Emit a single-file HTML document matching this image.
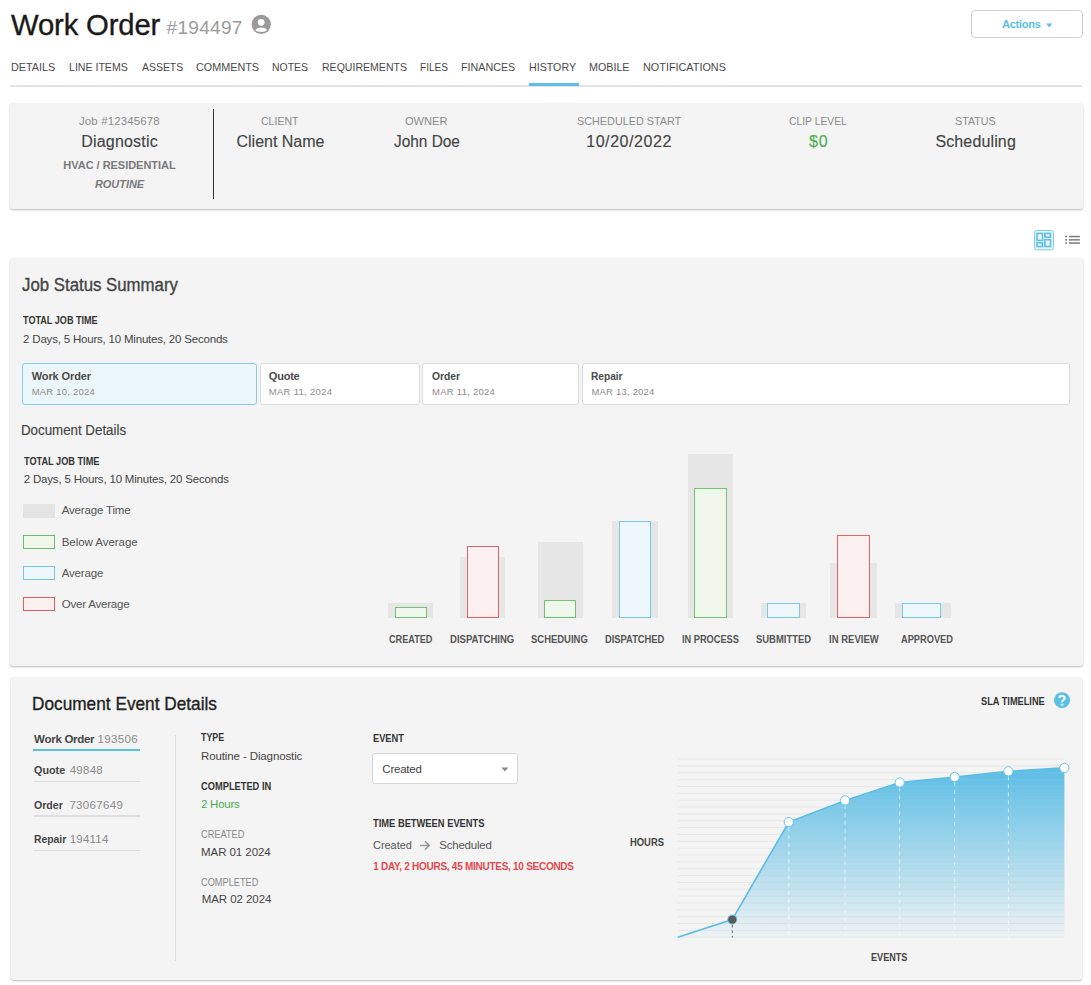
<!DOCTYPE html>
<html><head><meta charset="utf-8"><title>Work Order</title>
<style>
html,body{margin:0;padding:0;background:#fff;}
body{width:1091px;height:985px;position:relative;overflow:hidden;font-family:"Liberation Sans",sans-serif;}
.b{position:absolute;}
.t{position:absolute;white-space:nowrap;}
</style></head><body>
<div class="b" style="left:971px;top:10px;width:112px;height:28px;border:1px solid #d2d2d2;border-radius:4px;box-sizing:border-box;background:#fff"></div>
<svg class="b" style="left:1046px;top:22.5px" width="7" height="5"><path d="M0.3 0.4 L6.2 0.4 L3.25 4.6 Z" fill="#5bc0e6"/></svg>
<svg class="b" style="left:250px;top:13px" width="23" height="23" viewBox="0 0 23 23"><circle cx="11.25" cy="11.35" r="9.6" fill="#9a9a9a"/><circle cx="11.2" cy="9.35" r="3.4" fill="#fff"/><path d="M5.4 17.0 C7.2 13.7 15.3 13.7 17.1 17.0 C15.3 19.6 7.2 19.6 5.4 17.0Z" fill="#fff"/></svg>
<div class="b" style="left:10px;top:85px;width:1072px;height:2px;background:#e3e3e3"></div>
<div class="b" style="left:528.5px;top:83px;width:50.5px;height:3px;background:#5bc0e6"></div>
<div class="b" style="left:10px;top:102.5px;width:1072.5px;height:106.3px;background:#f4f4f4;border-radius:3px;box-shadow:0 1px 2px rgba(0,0,0,.28)"></div>
<div class="b" style="left:213px;top:108.7px;width:1px;height:90.7px;background:#333"></div>
<svg class="b" style="left:1033px;top:229px" width="22" height="22" viewBox="0 0 22 22">
<rect x="1.5" y="1.5" width="19" height="19.3" rx="2" fill="#eaf5fa" stroke="#7fcdec" stroke-width="1"/>
<rect x="4" y="4.4" width="5.5" height="7" fill="#eef7fb" stroke="#5bc0e6" stroke-width="1.6"/>
<rect x="11.9" y="4.4" width="5.6" height="3.7" fill="#eef7fb" stroke="#5bc0e6" stroke-width="1.6"/>
<rect x="4" y="13.8" width="5.5" height="3.7" fill="#eef7fb" stroke="#5bc0e6" stroke-width="1.6"/>
<rect x="11.9" y="10.7" width="5.6" height="6.8" fill="#eef7fb" stroke="#5bc0e6" stroke-width="1.6"/>
</svg>
<svg class="b" style="left:1064px;top:234px" width="17" height="12" viewBox="0 0 17 12">
<g fill="#7a7a7a"><rect x="1.2" y="1.8" width="1.8" height="1.5"/><rect x="1.2" y="5.1" width="1.8" height="1.5"/><rect x="1.2" y="8.3" width="1.8" height="1.5"/>
<rect x="4.9" y="1.8" width="11" height="1.5"/><rect x="4.9" y="5.1" width="11" height="1.5"/><rect x="4.9" y="8.3" width="11" height="1.5"/></g></svg>
<div class="b" style="left:9.5px;top:257.5px;width:1073px;height:408.5px;background:#f4f4f4;border-radius:3px;box-shadow:0 1px 2px rgba(0,0,0,.28)"></div>
<div class="b" style="left:22px;top:363.2px;width:235px;height:41.5px;background:#ebf6fb;border:1px solid #86cdea;border-radius:3px;box-sizing:border-box"></div>
<div class="b" style="left:259.5px;top:363.2px;width:160.5px;height:41.5px;background:#fff;border:1px solid #dcdcdc;border-radius:3px;box-sizing:border-box"></div>
<div class="b" style="left:422.3px;top:363.2px;width:157.0px;height:41.5px;background:#fff;border:1px solid #dcdcdc;border-radius:3px;box-sizing:border-box"></div>
<div class="b" style="left:581.7px;top:363.2px;width:487.9px;height:41.5px;background:#fff;border:1px solid #dcdcdc;border-radius:3px;box-sizing:border-box"></div>
<div class="b" style="left:22.9px;top:504px;width:32px;height:13.7px;background:#e4e4e4"></div>
<div class="b" style="left:22.9px;top:535px;width:32px;height:13.7px;background:#eff8ea;border:1px solid #66c06a;box-sizing:border-box"></div>
<div class="b" style="left:22.9px;top:566.1px;width:32px;height:13.7px;background:#edf7fc;border:1px solid #72c7ea;box-sizing:border-box"></div>
<div class="b" style="left:22.9px;top:597.2px;width:32px;height:13.7px;background:#fcefef;border:1px solid #e05e5e;box-sizing:border-box"></div>
<div class="b" style="left:388.1px;top:602.7px;width:44.8px;height:14.9px;background:#e6e6e6"></div>
<div class="b" style="left:394.8px;top:607px;width:32.1px;height:10.6px;background:#eff8ea;border:1px solid #72c375;box-sizing:border-box"></div>
<div class="b" style="left:459.8px;top:556.5px;width:44.8px;height:61.1px;background:#e6e6e6"></div>
<div class="b" style="left:466.8px;top:545.9px;width:31.8px;height:71.7px;background:#fcefef;border:1px solid #e26464;box-sizing:border-box"></div>
<div class="b" style="left:537.9px;top:542.2px;width:44.7px;height:75.4px;background:#e6e6e6"></div>
<div class="b" style="left:543.9px;top:599.7px;width:31.8px;height:17.9px;background:#eff8ea;border:1px solid #72c375;box-sizing:border-box"></div>
<div class="b" style="left:612px;top:521px;width:46px;height:96.6px;background:#e6e6e6"></div>
<div class="b" style="left:618.6px;top:521px;width:32.1px;height:96.6px;background:#edf7fc;border:1px solid #78c9ea;box-sizing:border-box"></div>
<div class="b" style="left:687.5px;top:454.2px;width:45.1px;height:163.4px;background:#e6e6e6"></div>
<div class="b" style="left:694.2px;top:488.4px;width:32.4px;height:129.2px;background:#eff8ea;border:1px solid #72c375;box-sizing:border-box"></div>
<div class="b" style="left:760.7px;top:602.7px;width:45.4px;height:14.9px;background:#e6e6e6"></div>
<div class="b" style="left:767.4px;top:603.3px;width:32.6px;height:14.3px;background:#edf7fc;border:1px solid #78c9ea;box-sizing:border-box"></div>
<div class="b" style="left:830.3px;top:562.5px;width:46.6px;height:55.1px;background:#e6e6e6"></div>
<div class="b" style="left:837.3px;top:535.3px;width:32.3px;height:82.3px;background:#fcefef;border:1px solid #e26464;box-sizing:border-box"></div>
<div class="b" style="left:895.3px;top:602.7px;width:56.0px;height:14.9px;background:#e6e6e6"></div>
<div class="b" style="left:902.3px;top:603.3px;width:39.0px;height:14.3px;background:#edf7fc;border:1px solid #78c9ea;box-sizing:border-box"></div>
<div class="b" style="left:10.8px;top:677px;width:1071.7px;height:303px;background:#f4f4f4;border-radius:3px;box-shadow:0 1px 2px rgba(0,0,0,.28)"></div>
<div class="b" style="left:33.1px;top:749.2px;width:107.3px;height:2px;background:#5bc0e6"></div>
<div class="b" style="left:33.8px;top:780.7px;width:106px;height:1.5px;background:#dedede"></div>
<div class="b" style="left:33.8px;top:815.4px;width:106px;height:1.5px;background:#dedede"></div>
<div class="b" style="left:33.8px;top:849.6px;width:106px;height:1.5px;background:#dedede"></div>
<div class="b" style="left:175px;top:735px;width:1px;height:225.5px;background:#dcdcdc"></div>
<div class="b" style="left:372.3px;top:752.6px;width:145.5px;height:31.8px;background:#fff;border:1px solid #d6d6d6;border-radius:3px;box-sizing:border-box"></div>
<svg class="b" style="left:501px;top:766.5px" width="8" height="5"><path d="M0.4 0.6 L7.4 0.6 L3.9 4.4Z" fill="#8a8a8a"/></svg>
<svg class="b" style="left:419px;top:839.5px" width="12" height="11" viewBox="0 0 12 11"><path d="M1 5.5 H10 M6 1.4 L10.2 5.5 L6 9.6" fill="none" stroke="#9a9a9a" stroke-width="1.6"/></svg>
<svg class="b" style="left:1052px;top:690px" width="20" height="20" viewBox="0 0 20 20"><circle cx="10.05" cy="10.15" r="8" fill="#5bc0e6"/>
<path d="M7.4 8.1 C7.4 4.9 12.6 4.9 12.6 8 C12.6 9.9 10.1 10 10.1 12.2" fill="none" stroke="#fff" stroke-width="2.1"/><circle cx="10.1" cy="14.6" r="1.2" fill="#fff"/></svg>
<svg class="b" style="left:660px;top:740px" width="420" height="210" viewBox="0 0 420 210">
<defs><linearGradient id="ag" x1="0" y1="27" x2="0" y2="197" gradientUnits="userSpaceOnUse"><stop offset="0" stop-color="#5bbde5" stop-opacity="1"/><stop offset="1" stop-color="#5bbde5" stop-opacity="0.04"/></linearGradient></defs>
<g stroke="#e7e7e7" stroke-width="1"><line x1="17.7" x2="404.4" y1="19.10" y2="19.10"/><line x1="17.7" x2="404.4" y1="25.95" y2="25.95"/><line x1="17.7" x2="404.4" y1="32.80" y2="32.80"/><line x1="17.7" x2="404.4" y1="39.65" y2="39.65"/><line x1="17.7" x2="404.4" y1="46.50" y2="46.50"/><line x1="17.7" x2="404.4" y1="53.35" y2="53.35"/><line x1="17.7" x2="404.4" y1="60.20" y2="60.20"/><line x1="17.7" x2="404.4" y1="67.05" y2="67.05"/><line x1="17.7" x2="404.4" y1="73.90" y2="73.90"/><line x1="17.7" x2="404.4" y1="80.75" y2="80.75"/><line x1="17.7" x2="404.4" y1="87.60" y2="87.60"/><line x1="17.7" x2="404.4" y1="94.45" y2="94.45"/><line x1="17.7" x2="404.4" y1="101.30" y2="101.30"/><line x1="17.7" x2="404.4" y1="108.15" y2="108.15"/><line x1="17.7" x2="404.4" y1="115.00" y2="115.00"/><line x1="17.7" x2="404.4" y1="121.85" y2="121.85"/><line x1="17.7" x2="404.4" y1="128.70" y2="128.70"/><line x1="17.7" x2="404.4" y1="135.55" y2="135.55"/><line x1="17.7" x2="404.4" y1="142.40" y2="142.40"/><line x1="17.7" x2="404.4" y1="149.25" y2="149.25"/><line x1="17.7" x2="404.4" y1="156.10" y2="156.10"/><line x1="17.7" x2="404.4" y1="162.95" y2="162.95"/><line x1="17.7" x2="404.4" y1="169.80" y2="169.80"/><line x1="17.7" x2="404.4" y1="176.65" y2="176.65"/><line x1="17.7" x2="404.4" y1="183.50" y2="183.50"/><line x1="17.7" x2="404.4" y1="190.35" y2="190.35"/><line x1="17.7" x2="404.4" y1="197.20" y2="197.20"/></g>
<polygon points="17.7,197.2 72.3,179.6 128.8,82.1 185.1,60.4 239.7,42.5 294.7,37.0 348.4,31.3 404.4,27.9 404.4,197.5 17.7,197.5" fill="url(#ag)"/>
<g stroke="#ffffff" stroke-opacity="0.08" stroke-width="1"><line x1="17.7" x2="404.4" y1="19.10" y2="19.10"/><line x1="17.7" x2="404.4" y1="25.95" y2="25.95"/><line x1="17.7" x2="404.4" y1="32.80" y2="32.80"/><line x1="17.7" x2="404.4" y1="39.65" y2="39.65"/><line x1="17.7" x2="404.4" y1="46.50" y2="46.50"/><line x1="17.7" x2="404.4" y1="53.35" y2="53.35"/><line x1="17.7" x2="404.4" y1="60.20" y2="60.20"/><line x1="17.7" x2="404.4" y1="67.05" y2="67.05"/><line x1="17.7" x2="404.4" y1="73.90" y2="73.90"/><line x1="17.7" x2="404.4" y1="80.75" y2="80.75"/><line x1="17.7" x2="404.4" y1="87.60" y2="87.60"/><line x1="17.7" x2="404.4" y1="94.45" y2="94.45"/><line x1="17.7" x2="404.4" y1="101.30" y2="101.30"/><line x1="17.7" x2="404.4" y1="108.15" y2="108.15"/><line x1="17.7" x2="404.4" y1="115.00" y2="115.00"/><line x1="17.7" x2="404.4" y1="121.85" y2="121.85"/><line x1="17.7" x2="404.4" y1="128.70" y2="128.70"/><line x1="17.7" x2="404.4" y1="135.55" y2="135.55"/><line x1="17.7" x2="404.4" y1="142.40" y2="142.40"/><line x1="17.7" x2="404.4" y1="149.25" y2="149.25"/><line x1="17.7" x2="404.4" y1="156.10" y2="156.10"/><line x1="17.7" x2="404.4" y1="162.95" y2="162.95"/><line x1="17.7" x2="404.4" y1="169.80" y2="169.80"/><line x1="17.7" x2="404.4" y1="176.65" y2="176.65"/><line x1="17.7" x2="404.4" y1="183.50" y2="183.50"/><line x1="17.7" x2="404.4" y1="190.35" y2="190.35"/><line x1="17.7" x2="404.4" y1="197.20" y2="197.20"/></g>
<g stroke="#fff" stroke-width="1" stroke-dasharray="4 4" opacity="0.6"><line x1="128.8" x2="128.8" y1="87.1" y2="197.5"/><line x1="185.1" x2="185.1" y1="65.4" y2="197.5"/><line x1="239.7" x2="239.7" y1="47.5" y2="197.5"/><line x1="294.7" x2="294.7" y1="42.0" y2="197.5"/><line x1="348.4" x2="348.4" y1="36.3" y2="197.5"/></g>
<line x1="72.29999999999995" x2="72.29999999999995" y1="185" y2="197.5" stroke="#666" stroke-width="1" stroke-dasharray="2.5 3"/>
<polyline points="17.7,197.2 72.3,179.6 128.8,82.1 185.1,60.4 239.7,42.5 294.7,37.0 348.4,31.3 404.4,27.9" fill="none" stroke="#5bbde5" stroke-width="1.6"/>
<g fill="#fff" stroke="#6cc6ea" stroke-width="1"><circle cx="128.8" cy="82.1" r="4.6"/><circle cx="185.1" cy="60.4" r="4.6"/><circle cx="239.7" cy="42.5" r="4.6"/><circle cx="294.7" cy="37.0" r="4.6"/><circle cx="348.4" cy="31.3" r="4.6"/><circle cx="404.4" cy="27.9" r="4.6"/></g>
<circle cx="72.29999999999995" cy="179.60000000000002" r="4.6" fill="#5a5a5a" stroke="#7ccbea" stroke-width="1"/>
</svg>
<div class="t" style="left:11.00px;top:5.70px;font-size:29.28px;line-height:37px;color:#1a1a1a;-webkit-text-stroke:0.35px #1a1a1a;letter-spacing:-0.160px">Work Order</div>
<div class="t" style="left:166.50px;top:15.70px;font-size:18.99px;line-height:24px;color:#9b9b9b;letter-spacing:0.317px">#194497</div>
<div class="t" style="left:1002.00px;top:16.80px;font-size:11.00px;line-height:14px;color:#5bc0e6;font-weight:700;letter-spacing:-0.253px">Actions</div>
<div class="t" style="left:11.00px;top:60.10px;font-size:11.50px;line-height:14px;color:#4a4a4a;transform:scaleX(0.9366);transform-origin:0 0">DETAILS</div>
<div class="t" style="left:68.70px;top:60.10px;font-size:11.50px;line-height:14px;color:#4a4a4a;transform:scaleX(0.9201);transform-origin:0 0">LINE ITEMS</div>
<div class="t" style="left:141.50px;top:60.10px;font-size:11.50px;line-height:14px;color:#4a4a4a;transform:scaleX(0.9080);transform-origin:0 0">ASSETS</div>
<div class="t" style="left:195.60px;top:60.10px;font-size:11.50px;line-height:14px;color:#4a4a4a;transform:scaleX(0.9405);transform-origin:0 0">COMMENTS</div>
<div class="t" style="left:271.70px;top:60.10px;font-size:11.50px;line-height:14px;color:#4a4a4a;transform:scaleX(0.9062);transform-origin:0 0">NOTES</div>
<div class="t" style="left:321.60px;top:60.10px;font-size:11.50px;line-height:14px;color:#4a4a4a;transform:scaleX(0.9174);transform-origin:0 0">REQUIREMENTS</div>
<div class="t" style="left:419.70px;top:60.10px;font-size:11.50px;line-height:14px;color:#4a4a4a;transform:scaleX(0.8765);transform-origin:0 0">FILES</div>
<div class="t" style="left:461.40px;top:60.10px;font-size:11.50px;line-height:14px;color:#4a4a4a;transform:scaleX(0.9320);transform-origin:0 0">FINANCES</div>
<div class="t" style="left:528.60px;top:60.10px;font-size:11.50px;line-height:14px;color:#4a4a4a;transform:scaleX(0.9269);transform-origin:0 0">HISTORY</div>
<div class="t" style="left:588.50px;top:60.10px;font-size:11.50px;line-height:14px;color:#4a4a4a;transform:scaleX(0.9318);transform-origin:0 0">MOBILE</div>
<div class="t" style="left:642.90px;top:60.10px;font-size:11.50px;line-height:14px;color:#4a4a4a;transform:scaleX(0.9424);transform-origin:0 0">NOTIFICATIONS</div>
<div class="t" style="left:79.00px;top:114.10px;font-size:11.50px;line-height:14px;color:#8c8c8c;letter-spacing:0.108px">Job #12345678</div>
<div class="t" style="left:81.20px;top:131.90px;font-size:16.00px;line-height:20px;color:#444;-webkit-text-stroke:0.15px #444;letter-spacing:0.200px">Diagnostic</div>
<div class="t" style="left:63.30px;top:157.80px;font-size:11.00px;line-height:14px;color:#7a7a7a;font-weight:700;letter-spacing:-0.026px">HVAC / RESIDENTIAL</div>
<div class="t" style="left:94.90px;top:176.80px;font-size:11.00px;line-height:14px;color:#7a7a7a;font-weight:700;font-style:italic;letter-spacing:-0.044px">ROUTINE</div>
<div class="t" style="left:261.40px;top:114.10px;font-size:11.50px;line-height:14px;color:#8c8c8c;transform:scaleX(0.9151);transform-origin:0 0">CLIENT</div>
<div class="t" style="left:236.50px;top:131.90px;font-size:16.00px;line-height:20px;color:#444;-webkit-text-stroke:0.15px #444;letter-spacing:-0.013px">Client Name</div>
<div class="t" style="left:404.90px;top:114.10px;font-size:11.50px;line-height:14px;color:#8c8c8c;transform:scaleX(0.9640);transform-origin:0 0">OWNER</div>
<div class="t" style="left:393.90px;top:131.90px;font-size:16.00px;line-height:20px;color:#444;-webkit-text-stroke:0.15px #444;transform:scaleX(0.9622);transform-origin:0 0">John Doe</div>
<div class="t" style="left:577.20px;top:114.10px;font-size:11.50px;line-height:14px;color:#8c8c8c;transform:scaleX(0.9410);transform-origin:0 0">SCHEDULED START</div>
<div class="t" style="left:586.20px;top:131.90px;font-size:16.00px;line-height:20px;color:#444;-webkit-text-stroke:0.15px #444;letter-spacing:0.569px">10/20/2022</div>
<div class="t" style="left:788.80px;top:114.10px;font-size:11.50px;line-height:14px;color:#8c8c8c;transform:scaleX(0.8992);transform-origin:0 0">CLIP LEVEL</div>
<div class="t" style="left:809.00px;top:131.90px;font-size:16.00px;line-height:20px;color:#4caf50;-webkit-text-stroke:0.15px #4caf50;letter-spacing:0.802px">$0</div>
<div class="t" style="left:955.00px;top:114.10px;font-size:11.50px;line-height:14px;color:#8c8c8c;transform:scaleX(0.9321);transform-origin:0 0">STATUS</div>
<div class="t" style="left:935.40px;top:131.90px;font-size:16.00px;line-height:20px;color:#444;-webkit-text-stroke:0.15px #444;letter-spacing:0.136px">Scheduling</div>
<div class="t" style="left:22.00px;top:274.30px;font-size:17.50px;line-height:22px;color:#444;-webkit-text-stroke:0.35px #444;transform:scaleX(0.9602);transform-origin:0 0">Job Status Summary</div>
<div class="t" style="left:23.10px;top:314.40px;font-size:10.50px;line-height:13px;color:#333;font-weight:700;transform:scaleX(0.8645);transform-origin:0 0">TOTAL JOB TIME</div>
<div class="t" style="left:23.10px;top:332.00px;font-size:11.50px;line-height:14px;color:#444;letter-spacing:-0.197px">2 Days, 5 Hours, 10 Minutes, 20 Seconds</div>
<div class="t" style="left:31.70px;top:368.80px;font-size:11.00px;line-height:14px;color:#4a4a4a;font-weight:700;letter-spacing:-0.103px">Work Order</div>
<div class="t" style="left:268.80px;top:368.80px;font-size:11.00px;line-height:14px;color:#4a4a4a;font-weight:700;letter-spacing:-0.214px">Quote</div>
<div class="t" style="left:432.00px;top:368.80px;font-size:11.00px;line-height:14px;color:#4a4a4a;font-weight:700;transform:scaleX(0.9389);transform-origin:0 0">Order</div>
<div class="t" style="left:591.40px;top:368.80px;font-size:11.00px;line-height:14px;color:#4a4a4a;font-weight:700;transform:scaleX(0.9212);transform-origin:0 0">Repair</div>
<div class="t" style="left:31.70px;top:385.90px;font-size:9.50px;line-height:12px;color:#8c8c8c;letter-spacing:0.214px">MAR 10, 2024</div>
<div class="t" style="left:268.80px;top:385.90px;font-size:9.50px;line-height:12px;color:#8c8c8c;letter-spacing:0.287px">MAR 11, 2024</div>
<div class="t" style="left:432.00px;top:385.90px;font-size:9.50px;line-height:12px;color:#8c8c8c;letter-spacing:0.260px">MAR 11, 2024</div>
<div class="t" style="left:591.40px;top:385.90px;font-size:9.50px;line-height:12px;color:#8c8c8c;letter-spacing:0.205px">MAR 13, 2024</div>
<div class="t" style="left:20.95px;top:420.80px;font-size:14.00px;line-height:18px;color:#444;-webkit-text-stroke:0.15px #444;transform:scaleX(0.9508);transform-origin:0 0">Document Details</div>
<div class="t" style="left:23.70px;top:454.50px;font-size:10.50px;line-height:13px;color:#333;font-weight:700;transform:scaleX(0.8737);transform-origin:0 0">TOTAL JOB TIME</div>
<div class="t" style="left:23.70px;top:472.00px;font-size:11.50px;line-height:14px;color:#444;letter-spacing:-0.183px">2 Days, 5 Hours, 10 Minutes, 20 Seconds</div>
<div class="t" style="left:61.70px;top:503.30px;font-size:11.50px;line-height:14px;color:#555;letter-spacing:-0.159px">Average Time</div>
<div class="t" style="left:61.70px;top:534.80px;font-size:11.50px;line-height:14px;color:#555;letter-spacing:-0.046px">Below Average</div>
<div class="t" style="left:61.70px;top:565.50px;font-size:11.50px;line-height:14px;color:#555;letter-spacing:-0.172px">Average</div>
<div class="t" style="left:61.70px;top:596.70px;font-size:11.50px;line-height:14px;color:#555;letter-spacing:-0.195px">Over Average</div>
<div class="t" style="left:388.80px;top:633.30px;font-size:10.50px;line-height:13px;color:#555;font-weight:700;transform:scaleX(0.8692);transform-origin:0 0">CREATED</div>
<div class="t" style="left:450.20px;top:633.30px;font-size:10.50px;line-height:13px;color:#555;font-weight:700;transform:scaleX(0.9078);transform-origin:0 0">DISPATCHING</div>
<div class="t" style="left:531.20px;top:633.30px;font-size:10.50px;line-height:13px;color:#555;font-weight:700;transform:scaleX(0.9007);transform-origin:0 0">SCHEDUING</div>
<div class="t" style="left:605.30px;top:633.30px;font-size:10.50px;line-height:13px;color:#555;font-weight:700;transform:scaleX(0.8895);transform-origin:0 0">DISPATCHED</div>
<div class="t" style="left:682.10px;top:633.30px;font-size:10.50px;line-height:13px;color:#555;font-weight:700;transform:scaleX(0.8786);transform-origin:0 0">IN PROCESS</div>
<div class="t" style="left:756.20px;top:633.30px;font-size:10.50px;line-height:13px;color:#555;font-weight:700;transform:scaleX(0.8984);transform-origin:0 0">SUBMITTED</div>
<div class="t" style="left:828.80px;top:633.30px;font-size:10.50px;line-height:13px;color:#555;font-weight:700;transform:scaleX(0.9085);transform-origin:0 0">IN REVIEW</div>
<div class="t" style="left:901.40px;top:633.30px;font-size:10.50px;line-height:13px;color:#555;font-weight:700;transform:scaleX(0.8813);transform-origin:0 0">APPROVED</div>
<div class="t" style="left:31.69px;top:692.20px;font-size:19.00px;line-height:24px;color:#222;-webkit-text-stroke:0.35px #222;transform:scaleX(0.9075);transform-origin:0 0">Document Event Details</div>
<div class="t" style="left:34.10px;top:732.30px;font-size:11.50px;line-height:14px;color:#444;font-weight:700;letter-spacing:-0.286px">Work Order</div>
<div class="t" style="left:97.60px;top:732.30px;font-size:11.50px;line-height:14px;color:#8a8a8a;letter-spacing:0.324px">193506</div>
<div class="t" style="left:34.10px;top:763.40px;font-size:11.50px;line-height:14px;color:#444;font-weight:700;transform:scaleX(0.9383);transform-origin:0 0">Quote</div>
<div class="t" style="left:69.70px;top:763.40px;font-size:11.50px;line-height:14px;color:#8a8a8a;letter-spacing:0.254px">49848</div>
<div class="t" style="left:34.10px;top:797.90px;font-size:11.50px;line-height:14px;color:#444;font-weight:700;transform:scaleX(0.9202);transform-origin:0 0">Order</div>
<div class="t" style="left:69.40px;top:797.90px;font-size:11.50px;line-height:14px;color:#8a8a8a;letter-spacing:0.333px">73067649</div>
<div class="t" style="left:34.10px;top:832.20px;font-size:11.50px;line-height:14px;color:#444;font-weight:700;transform:scaleX(0.9004);transform-origin:0 0">Repair</div>
<div class="t" style="left:69.70px;top:832.20px;font-size:11.50px;line-height:14px;color:#8a8a8a;letter-spacing:0.235px">194114</div>
<div class="t" style="left:201.00px;top:731.40px;font-size:10.00px;line-height:13px;color:#333;font-weight:700;transform:scaleX(0.8810);transform-origin:0 0">TYPE</div>
<div class="t" style="left:201.00px;top:749.20px;font-size:11.50px;line-height:14px;color:#444;letter-spacing:-0.116px">Routine - Diagnostic</div>
<div class="t" style="left:201.00px;top:779.70px;font-size:10.00px;line-height:13px;color:#333;font-weight:700;transform:scaleX(0.9292);transform-origin:0 0">COMPLETED IN</div>
<div class="t" style="left:201.00px;top:796.80px;font-size:11.50px;line-height:14px;color:#4caf50;letter-spacing:-0.253px">2 Hours</div>
<div class="t" style="left:201.00px;top:827.50px;font-size:10.00px;line-height:13px;color:#888;transform:scaleX(0.9227);transform-origin:0 0">CREATED</div>
<div class="t" style="left:201.00px;top:844.70px;font-size:11.50px;line-height:14px;color:#444;letter-spacing:-0.062px">MAR 01 2024</div>
<div class="t" style="left:201.00px;top:875.50px;font-size:10.00px;line-height:13px;color:#888;transform:scaleX(0.9224);transform-origin:0 0">COMPLETED</div>
<div class="t" style="left:201.70px;top:892.40px;font-size:11.50px;line-height:14px;color:#444;letter-spacing:-0.062px">MAR 02 2024</div>
<div class="t" style="left:372.60px;top:731.60px;font-size:10.00px;line-height:13px;color:#333;font-weight:700;transform:scaleX(0.9268);transform-origin:0 0">EVENT</div>
<div class="t" style="left:382.30px;top:761.70px;font-size:11.50px;line-height:14px;color:#444;letter-spacing:-0.219px">Created</div>
<div class="t" style="left:373.20px;top:816.60px;font-size:10.00px;line-height:13px;color:#333;font-weight:700;transform:scaleX(0.9334);transform-origin:0 0">TIME BETWEEN EVENTS</div>
<div class="t" style="left:373.20px;top:837.80px;font-size:11.50px;line-height:14px;color:#555;transform:scaleX(0.9502);transform-origin:0 0">Created</div>
<div class="t" style="left:439.30px;top:837.80px;font-size:11.50px;line-height:14px;color:#555;letter-spacing:-0.232px">Scheduled</div>
<div class="t" style="left:373.20px;top:860.30px;font-size:10.00px;line-height:13px;color:#e5484d;font-weight:700;letter-spacing:-0.271px">1 DAY, 2 HOURS, 45 MINUTES, 10 SECONDS</div>
<div class="t" style="left:629.60px;top:835.50px;font-size:10.00px;line-height:13px;color:#444;font-weight:700;transform:scaleX(0.9412);transform-origin:0 0">HOURS</div>
<div class="t" style="left:980.80px;top:694.50px;font-size:10.00px;line-height:13px;color:#333;font-weight:700;transform:scaleX(0.9230);transform-origin:0 0">SLA TIMELINE</div>
<div class="t" style="left:871.40px;top:951.30px;font-size:10.00px;line-height:13px;color:#444;font-weight:700;transform:scaleX(0.9098);transform-origin:0 0">EVENTS</div>
</body></html>
